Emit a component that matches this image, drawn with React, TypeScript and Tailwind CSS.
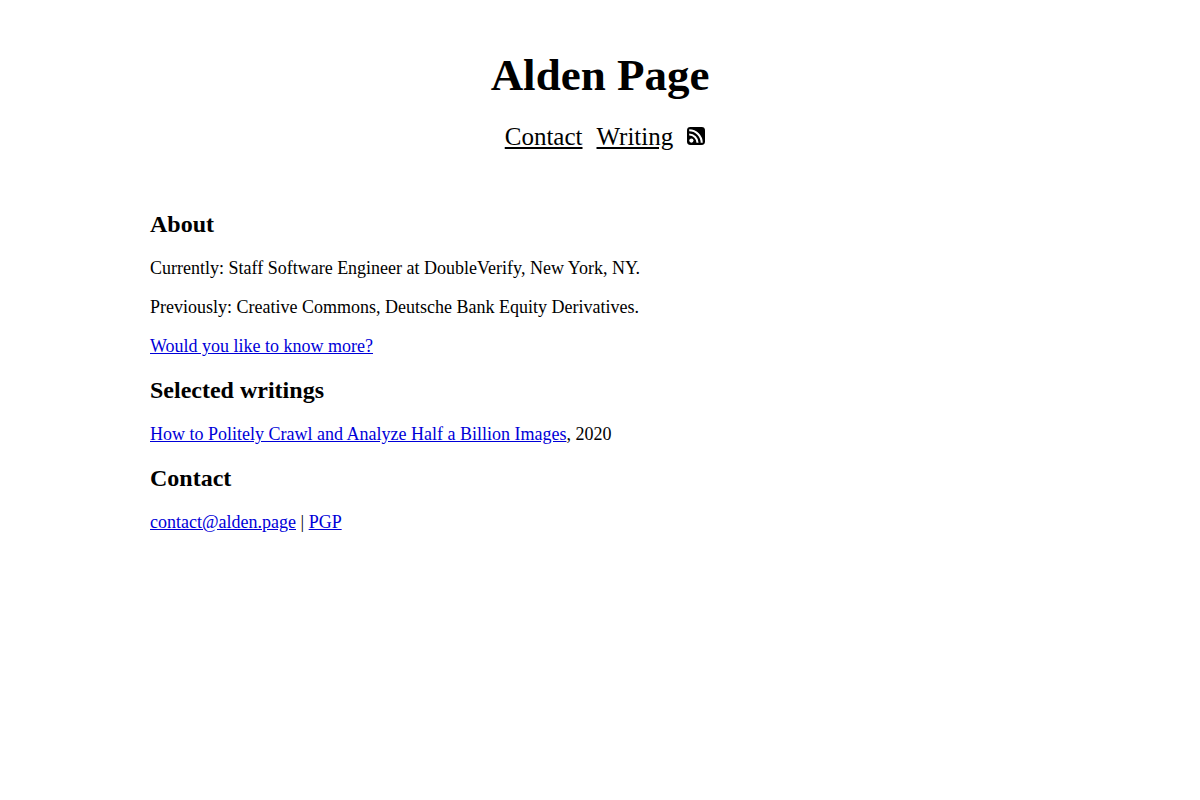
const link = "text-[#0000d8] underline";

export default function App() {
  return (
    <div className="min-h-screen bg-white px-[150px] pt-[50px] font-['Liberation_Serif',serif] text-[18px] leading-[21px] text-black">
      <header className="flex flex-col items-center">
        <h1 className="text-[45px] leading-[51px] font-bold">Alden Page</h1>
        <nav className="mt-[21px] flex items-center gap-[14px] pl-[10px] text-[25px] leading-[29px]">
          <a href="#contact" className="underline">Contact</a>
          <a href="#writing" className="underline">Writing</a>
          <a href="#feed" aria-label="RSS feed" className="pb-[2px]">
            <svg viewBox="0 0 18 18" className="block size-[18px]" aria-hidden="true">
              <rect width="18" height="18" rx="3.4" fill="#000" />
              <circle cx="4.4" cy="13.6" r="2.1" fill="#fff" />
              <path d="M2.2 7.5a8.3 8.3 0 0 1 8.3 8.3M2.2 3.3a12.5 12.5 0 0 1 12.5 12.5" fill="none" stroke="#fff" strokeWidth="2.1" />
            </svg>
          </a>
        </nav>
      </header>
      <main className="mt-[60px]">
        <section>
          <h2 className="text-[24px] leading-[27px] font-bold">About</h2>
          <p className="mt-[20px]">Currently: Staff Software Engineer at DoubleVerify, New York, NY.</p>
          <p className="mt-[18px]">Previously: Creative Commons, Deutsche Bank Equity Derivatives.</p>
          <p className="mt-[18px]"><a href="#about" className={link}>Would you like to know more?</a></p>
        </section>
        <section id="writing" className="mt-[20px]">
          <h2 className="text-[24px] leading-[27px] font-bold">Selected writings</h2>
          <p className="mt-[20px]"><a href="#crawl" className={link}>How to Politely Crawl and Analyze Half a Billion Images</a>, 2020</p>
        </section>
        <section id="contact" className="mt-[20px]">
          <h2 className="text-[24px] leading-[27px] font-bold">Contact</h2>
          <p className="mt-[20px]"><a href="mailto:contact@alden.page" className={link}>contact@alden.page</a> | <a href="#pgp" className={link}>PGP</a></p>
        </section>
      </main>
    </div>
  );
}
